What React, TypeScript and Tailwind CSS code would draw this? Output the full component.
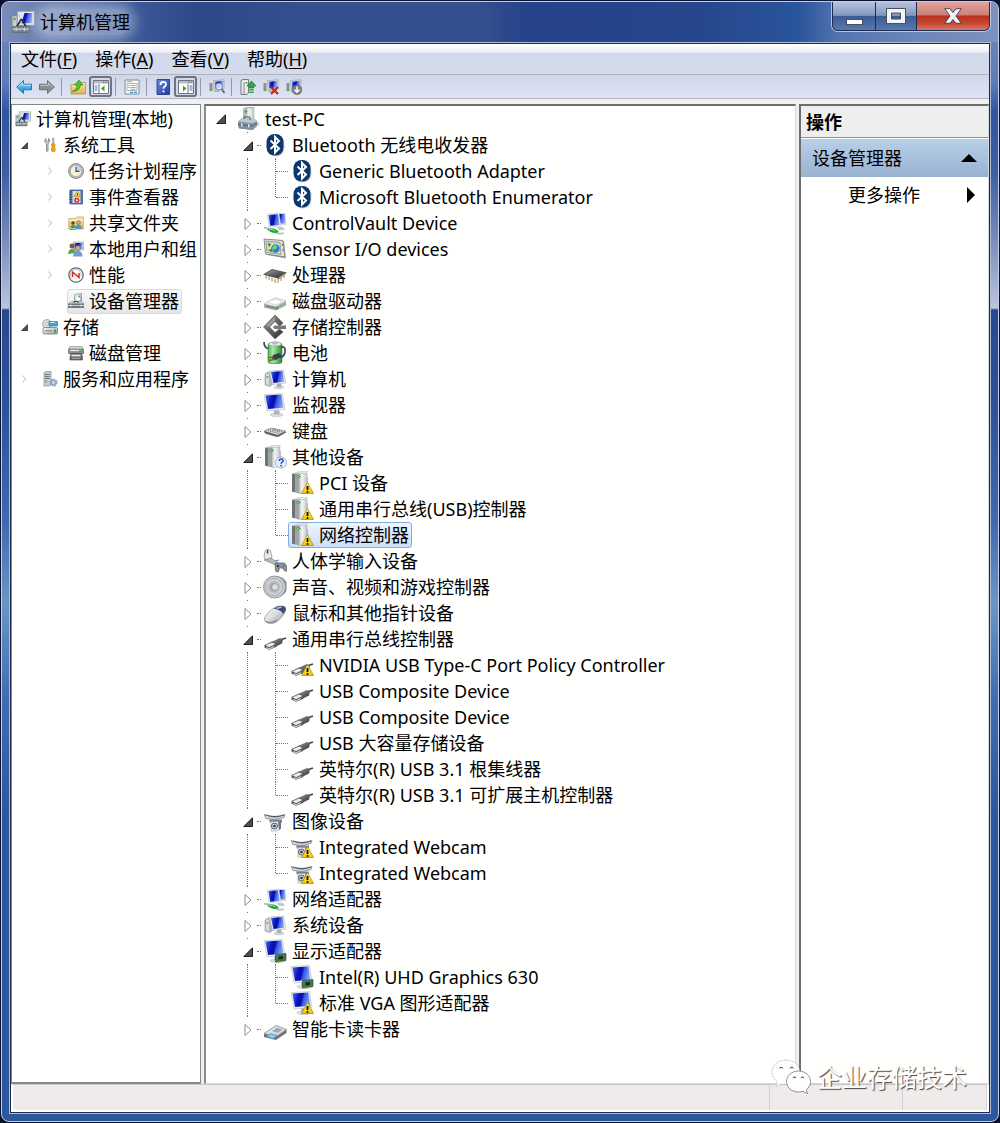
import type { ReactNode } from "react";

/* ---------- shared gradients ---------- */

function Defs() {
  return (
    <svg aria-hidden="true" className="absolute h-0 w-0">
      <defs>
        <linearGradient id="screen" x1="0" y1=".4" x2="1" y2=".6">
          <stop offset="0" stopColor="#3f58ea" />
          <stop offset=".3" stopColor="#0c14c0" />
          <stop offset=".5" stopColor="#0810a8" />
          <stop offset=".6" stopColor="#3554e6" />
          <stop offset="1" stopColor="#8fb0f8" />
        </linearGradient>
        <linearGradient id="metal" x1="0" y1="0" x2="1" y2="1">
          <stop offset="0" stopColor="#fafafa" />
          <stop offset="1" stopColor="#9a9ea3" />
        </linearGradient>
        <linearGradient id="mouse" x1="0" y1="0" x2="1" y2="1">
          <stop offset="0" stopColor="#ffffff" />
          <stop offset=".5" stopColor="#d9dbde" />
          <stop offset="1" stopColor="#8d9196" />
        </linearGradient>
        <linearGradient id="tower" x1="0" y1="0" x2="1" y2="0">
          <stop offset="0" stopColor="#c4c6c7" />
          <stop offset=".4" stopColor="#f4f4f4" />
          <stop offset="1" stopColor="#c3c5c6" />
        </linearGradient>
        <linearGradient id="dark" x1="0" y1="0" x2="1" y2="1">
          <stop offset="0" stopColor="#9a9a9e" />
          <stop offset="1" stopColor="#2c2c34" />
        </linearGradient>
        <linearGradient id="green" x1="0" y1="0" x2="1" y2="0">
          <stop offset="0" stopColor="#4fb45a" />
          <stop offset=".35" stopColor="#a9eaa4" />
          <stop offset="1" stopColor="#238a33" />
        </linearGradient>
        <linearGradient id="yellow" x1="0" y1="0" x2="0" y2="1">
          <stop offset="0" stopColor="#fff27a" />
          <stop offset="1" stopColor="#f2c200" />
        </linearGradient>
        <linearGradient id="folder" x1="0" y1="0" x2="0" y2="1">
          <stop offset="0" stopColor="#fbe7a6" />
          <stop offset="1" stopColor="#e0b452" />
        </linearGradient>
        <linearGradient id="blueArrow" x1="0" y1="0" x2="0" y2="1">
          <stop offset="0" stopColor="#8fdcff" />
          <stop offset="1" stopColor="#1686cf" />
        </linearGradient>
        <linearGradient id="help" x1="0" y1="0" x2="1" y2="1">
          <stop offset="0" stopColor="#6f8be6" />
          <stop offset="1" stopColor="#1d3a9c" />
        </linearGradient>
        <radialGradient id="cone">
          <stop offset="0" stopColor="#f4f6f8" />
          <stop offset=".3" stopColor="#9da3a9" />
          <stop offset="1" stopColor="#dfe2e4" />
        </radialGradient>
      </defs>
    </svg>
  );
}

/* ---------- small building blocks for drawings ---------- */

function Svg({ size, children, large = false }: { size: 16 | 24; children: ReactNode; large?: boolean }) {
  return (
    <svg
      aria-hidden="true"
      viewBox={size === 16 ? "0 0 16 16" : "0 0 24 24"}
      className={size === 16 && !large ? "size-4 shrink-0" : "size-6 shrink-0"}
    >
      {children}
    </svg>
  );
}

const Warning = () => (
  <g>
    <path d="M17.500 11.500 23.500 22.500H11.500Z" fill="url(#yellow)" stroke="#b98f00" strokeWidth=".8" strokeLinejoin="round" />
    <path d="M17.500 15v4" stroke="#111" strokeWidth="1.800" />
    <circle cx="17.500" cy="20.900" r="1" fill="#111" />
  </g>
);

const Monitor = () => (
  <g>
    <ellipse cx="13.500" cy="21.800" rx="6.500" ry="1.800" fill="#dcdfe1" stroke="#b2b6ba" strokeWidth=".5" />
    <path d="M11 16h5l.8 5.500H11Z" fill="#b0b4b8" />
    <path d="M1 1.500 19.500.5l2.500 16-18 1.500Z" fill="#eceef0" stroke="#bcc0c4" strokeWidth=".6" />
    <path d="M2.500 2.500 18.300 1.600l2.200 13.200-15.500 1.300Z" fill="url(#screen)" />
  </g>
);

const ComputerArt = () => (
  <g>
    <path d="M2 7 5 5h5v12l-3 2.500-5-1.500Z" fill="#b4b8bb" stroke="#8b9093" strokeWidth=".5" />
    <path d="M3 7.500 6 6v12l-3-.8Z" fill="#d9dcde" />
    <circle cx="4.500" cy="10" r="1.100" fill="#4cb848" />
    <ellipse cx="16" cy="20.300" rx="5" ry="1.600" fill="#d5d8db" stroke="#b2b6ba" strokeWidth=".4" />
    <path d="M14 16h4l.5 4H14Z" fill="#a9adb1" />
    <path d="M6.500 4 20.500 3l2.200 13-13.200 1.500Z" fill="#eceef0" stroke="#aeb2b6" strokeWidth=".6" />
    <path d="M8 5 19.400 4.100 21.200 14.700 10.500 16Z" fill="url(#screen)" />
  </g>
);

const TowerArt = () => (
  <g>
    <path d="M14 6h4v14l-3 3Z" fill="#a2a5a7" opacity=".6" />
    <path d="M2 3 9 1v21.500l-7-2Z" fill="#a0a4a6" />
    <path d="M2 3 5 2v19.300l-3-.8Z" fill="#6f7375" />
    <path d="M9 2h8v17l-3 3.500H9Z" fill="url(#tower)" stroke="#9a9d9f" strokeWidth=".4" />
    <path d="M2 3 9.500.3H17.500L16 2.500H8Z" fill="#e5e6e6" stroke="#a9acae" strokeWidth=".4" />
    <path d="M5.500 5.500 8 4l3 1.300L8.500 7Z" fill="#2f9a27" />
    <path d="M7 5.500h1.500" stroke="#c9f5c0" />
  </g>
);

const WebcamArt = () => (
  <g>
    <path d="M1 5.500q10 4 21 0l-1 3q-9 3.500-18 1Z" fill="#d4d7da" stroke="#777b80" strokeWidth=".7" />
    <path d="M3 6q9 3.500 18 0" fill="none" stroke="#4a5a78" strokeWidth="1.300" />
    <path d="M6 10.500h13v3H7Z" fill="#7c8085" />
    <path d="M8 12.500h9v8l-3 1.500H8Z" fill="#eceef0" stroke="#9a9ea3" strokeWidth=".6" />
    <path d="M15 12.500h3v7l-2 1.500Z" fill="#6c747c" />
    <circle cx="11.500" cy="17" r="3" fill="#ccd5df" stroke="#4a5a6e" />
    <circle cx="11.500" cy="17" r="1.300" fill="#24364d" />
  </g>
);

const UsbArt = () => (
  <g transform="translate(0 2.500)">
    <path d="M17 10.500 23 8.500" stroke="#44444c" strokeWidth="1.800" />
    <path d="M8 12.500 17 8.500l3 1.500-1 4-7 3.500-4-1Z" fill="url(#dark)" />
    <path d="M1.500 15.500 9 12l5 2.500-1 3L6 20.500l-4.500-2.500Z" fill="#54555d" />
    <path d="M2.500 15.800 9 13l3.500 1.500-6.500 3.300Z" fill="#e9eaec" />
    <path d="M3.500 18 6 19.500l5-2.500" stroke="#cfd0d4" strokeWidth="1.200" fill="none" />
  </g>
);

const Board = () => (
  <g>
    <path d="M12.500 15.500 23 14.500v7l-10.500 1.500Z" fill="#3f7a55" stroke="#124a22" strokeWidth=".6" />
    <path d="M15.500 17.500 20 17v3l-4.500.5Z" fill="#222" />
    <path d="M13 23.500 22 22.400" stroke="#caa12a" strokeWidth="1" strokeDasharray="1 .7" />
  </g>
);

/* ---------- device icons (24px) ---------- */

const RootIcon = () => (
  <Svg size={24}>
    <path d="M7 1.500 10 0h8v14H7Z" fill="#b7babc" />
    <path d="M10 1h8v13h-8Z" fill="url(#tower)" stroke="#a3a6a8" strokeWidth=".5" />
    <circle cx="10" cy="4.500" r="1.200" fill="#37a12f" />
    <path d="m17 22 6-4v-3l-4 1Z" fill="#c5c9cb" />
    <path d="M2 14.500 6 11h11l4 3v5l-4 4-14-1.500Z" fill="#8796a0" />
    <path d="M2 14.500 6 11h11l4 3-5 2.500Z" fill="#b9c6ce" />
    <path d="M2 15 16 16.500V23L2.500 21Z" fill="#7d8f9b" />
    <path d="M2 17.500 16 19l5-3" fill="none" stroke="#53626c" />
    <path d="M8 12v-2h6v3" fill="none" stroke="#4f5b62" />
    <path d="M5 16.500h1.500v3H5zM12 17.200h1.500v3H12z" fill="#e6ecef" />
  </Svg>
);

const BluetoothIcon = () => (
  <Svg size={24}>
    <rect x="4.500" y="2" width="17" height="21.500" rx="8" fill="#9aa6b5" opacity=".45" />
    <rect x="3.500" y="1" width="17" height="21.500" rx="8" fill="#0b376e" />
    <path d="M7.500 7.500 16 15.500l-4 4V4l4 4-8.500 8" fill="none" stroke="#fff" strokeWidth="2" />
  </Svg>
);

const NetworkIcon = () => (
  <Svg size={24}>
    <path d="M11 2.500h11l1 11-11 .5Z" fill="#e3e6e9" stroke="#b8bcc1" strokeWidth=".5" />
    <path d="M12 3h9.500l.8 9.500H13Z" fill="url(#screen)" />
    <path d="M4 3 16 2l2 13-12 1Z" fill="#eceef0" stroke="#c3c7cb" strokeWidth=".5" />
    <path d="M5.500 4 15 3.200 16.700 14l-9.500.8Z" fill="url(#screen)" />
    <path d="M14 16h6l2 3h-6Z" fill="#c4c8cc" />
    <path d="M1 17q4-.5 7 2M13 22q4 1.500 8 0" fill="none" stroke="#b9bec2" strokeWidth="1.800" />
    <path d="M4 18.500q5-2 8-.5t4 3q-3 1.500-6 .8T4 18.500Z" fill="#1fa83a" />
    <path d="M6 18.700q4-1 6 1" stroke="#8cf09a" fill="none" />
  </Svg>
);

const SensorIcon = () => (
  <Svg size={24}>
    <path d="M3 3 21 4l2 17.500L4 18Z" fill="#a8acae" />
    <path d="M1 2 20 3.500l2 16.500L2.500 17Z" fill="#dfe3e1" stroke="#6f7476" strokeWidth=".8" />
    <path d="M3 4 17 5.500l1 12L4 15.500Z" fill="#d2debf" stroke="#7d8a6b" strokeWidth=".7" />
    <path d="m5 6 3 1-2 3ZM5 13l4-1v3Z" fill="#4b6332" />
    <circle cx="12.500" cy="11.500" r="4.300" fill="#2f7fd6" />
    <path d="M10 9q3-2 4 0t-2 3-1 3q-3-2-1-6Z" fill="#79d34a" />
    <circle cx="19.500" cy="8" r=".8" fill="#555" />
    <circle cx="20" cy="13" r=".8" fill="#555" />
  </Svg>
);

const CpuIcon = () => (
  <Svg size={24}>
    <path d="M3 12v4M6 13v4M9 14.500v4M12 16v4M15 16v4M18 14v4M21 12v3" stroke="#b98a4a" strokeWidth="1.100" />
    <path d="M0 11.500 9 6l15 3.500-8 6.500Z" fill="#55565a" />
    <path d="M2 11.300 9.500 6.800 22 9.800l-6.500 4.500Z" fill="url(#dark)" />
    <path d="M16 14.200 23 9.700v1.500L16 16Z" fill="#c3a063" />
  </Svg>
);

const DiskIcon = () => (
  <Svg size={24}>
    <path d="M1 15 12 8.500 23 12v4.500L13 21.500 1 18.500Z" fill="#a4a7aa" />
    <path d="M1 15 12 8.500 23 12l-10 5.500Z" fill="#eff0f1" stroke="#b2b5b8" strokeWidth=".5" />
    <ellipse cx="12" cy="13" rx="6" ry="2.300" fill="#fff" stroke="#c3c5c7" strokeWidth=".6" />
    <path d="M3 16.800 12 19" stroke="#6e7174" />
    <circle cx="14" cy="19" r="1.500" fill="#37b52d" />
  </Svg>
);

const StorageControllerIcon = () => (
  <Svg size={24}>
    <path d="M12 0 20 8l-3.500 3L12 6.500 6.500 12 12 17.500l4.500-3.500L20 17l-8 7L.5 12Z" fill="url(#dark)" stroke="#4b4b4b" strokeWidth=".5" />
    <path d="M12 1.500 3 11l3 .5L12 5.500Z" fill="#fff" opacity=".3" />
    <path d="M11.500 10.500h11.500v3.500h-11.500l-1.500-1.700Z" fill="#777" />
  </Svg>
);

const BatteryIcon = () => (
  <Svg size={24}>
    <rect x="5" y="2" width="14" height="20.500" rx="2.500" fill="url(#green)" stroke="#267d33" strokeWidth=".6" />
    <ellipse cx="12" cy="3" rx="6.500" ry="2" fill="#e9ebec" stroke="#8a8e91" strokeWidth=".6" />
    <ellipse cx="12" cy="2" rx="2.500" ry="1.200" fill="#c9cdd0" stroke="#8a8e91" strokeWidth=".5" />
    <path d="M1 1q0 6 4.500 6.500M18 6q5-1 4 5t-6 5" fill="none" stroke="#40475c" strokeWidth="1.700" />
    <path d="M10 14 16 12l3 3-6 4-4-1Z" fill="#3b3f4c" />
    <path d="m5 17 5-1M6 19.500l5-1" stroke="#85672a" strokeWidth="1.500" />
  </Svg>
);

const ComputerIcon = () => (
  <Svg size={24}>
    <ComputerArt />
  </Svg>
);

const MonitorIcon = () => (
  <Svg size={24}>
    <Monitor />
  </Svg>
);

const KeyboardIcon = () => (
  <Svg size={24}>
    <path d="M1 12.500q0-1 4-2.500 3-1.500 5-1l12 3q1.500.5 1 1.500l-7 4q-2 .8-4 0L2 14.500Z" fill="#5e6063" />
    <path d="M1.500 12 8.500 9l14 3-8 4Z" fill="#e6e7e8" stroke="#85878a" strokeWidth=".5" />
    <path d="m5 11.500 11 3M7 10.500l11 2.800M9.500 10l10 2.400" stroke="#6a6c6f" strokeDasharray="1.400 .8" />
  </Svg>
);

const UnknownGroupIcon = () => (
  <Svg size={24}>
    <TowerArt />
    <circle cx="18" cy="17.500" r="5.500" fill="#e7eefc" stroke="#8fa3c8" strokeWidth=".8" />
    <path d="M16.200 16q.2-2 2-2t1.900 1.700q0 1-1.200 1.600-.8.500-.8 1.400" fill="none" stroke="#1e49c8" strokeWidth="1.500" />
    <circle cx="18.100" cy="20.700" r=".9" fill="#1e49c8" />
  </Svg>
);

const UnknownDeviceIcon = () => (
  <Svg size={24}>
    <TowerArt />
    <Warning />
  </Svg>
);

const HidIcon = () => (
  <Svg size={24}>
    <path d="M2 2q1.500-2.500 4-1.500T8 4l1 4q0 3-4 3T1 8Z" fill="#e6e8ea" stroke="#85898c" strokeWidth=".7" />
    <path d="M4.500 1v3.500" stroke="#444" strokeWidth="1.500" />
    <path d="m1 11 12 5 3-1.500L8 9Z" fill="#b5b8bb" stroke="#77797c" strokeWidth=".6" />
    <path d="M12 15q2-2 4-1h4q2.500-.5 3.500 3l.5 4q-.5 2.500-2.500.5L19.500 19h-3l-1 3.500q-2 1.500-3-1Z" fill="#8e9298" stroke="#4f5358" strokeWidth=".7" />
    <circle cx="15" cy="17" r="1.200" fill="#3a3d42" />
    <circle cx="20.500" cy="17" r="1" fill="#2f6fd6" />
    <path d="m12 12 4-1" stroke="#3a82d8" />
  </Svg>
);

const SpeakerIcon = () => (
  <Svg size={24}>
    <path d="M12 1q8 0 11.500 6v9Q20 22 12 23Z" fill="#8a8f93" />
    <circle cx="11.500" cy="12" r="11" fill="#c8cccf" stroke="#878b8f" strokeWidth=".8" />
    <circle cx="11" cy="12" r="8.500" fill="url(#cone)" stroke="#9b9fa3" strokeWidth=".8" />
    <circle cx="12" cy="12" r="3.200" fill="#dce2e8" stroke="#878d93" strokeWidth=".6" />
  </Svg>
);

const MouseIcon = () => (
  <Svg size={24}>
    <path d="M1.500 17q2-5 7-8.500Q14 4 19 5q4 1 3.500 4-.5 4-5 8.500-4 4.500-8 5t-7-1.500q-1.500-1.500-1-4Z" fill="url(#mouse)" stroke="#85898e" strokeWidth=".6" />
    <path d="M10.500 7.500Q17 3.500 21.500 5.500q2 1.500 1 4.500L20 13q-1-4-9.500-5.500Z" fill="#3c4a78" />
    <path d="m13.500 7.500 5-1.500" stroke="#a9b8e4" strokeWidth="1.500" />
    <path d="M3 20.500q5 2.500 11-1.500" fill="none" stroke="#74787d" />
  </Svg>
);

const UsbIcon = () => (
  <Svg size={24}>
    <UsbArt />
  </Svg>
);

const UsbWarningIcon = () => (
  <Svg size={24}>
    <UsbArt />
    <Warning />
  </Svg>
);

const WebcamIcon = () => (
  <Svg size={24}>
    <WebcamArt />
  </Svg>
);

const WebcamWarningIcon = () => (
  <Svg size={24}>
    <WebcamArt />
    <Warning />
  </Svg>
);

const DisplayIcon = () => (
  <Svg size={24}>
    <Monitor />
    <Board />
  </Svg>
);

const DisplayWarningIcon = () => (
  <Svg size={24}>
    <Monitor />
    <Warning />
  </Svg>
);

const CardReaderIcon = () => (
  <Svg size={24}>
    <path d="M1 17 13 9.500l10.500 3V16L13 23 1 20Z" fill="#70767c" />
    <path d="M1 16.500 13 8.500l10.500 4L12.500 20Z" fill="#dde1e4" stroke="#7b8187" strokeWidth=".7" />
    <path d="m9 14 5-3.300 5.500 1.800-5 3.500Z" fill="#a2a9b0" />
    <path d="m3 19 5-2.500 6 2-4 3.500Z" fill="#8ec9ec" stroke="#2f7fae" strokeWidth=".6" />
  </Svg>
);

/* ---------- console icons (16px) ---------- */

const ConsoleIcon = ({ large = false }: { large?: boolean }) => (
  <Svg size={16} large={large}>
    <path d="M.8 4h3.400v8H.8Z" fill="#c9ccd0" stroke="#85898d" strokeWidth=".4" />
    <circle cx="2.300" cy="6" r=".9" fill="#3fb63a" />
    <path d="M4.200.8h11.300v9.400H4.200Z" fill="#e9eae4" stroke="#8f9294" strokeWidth=".6" />
    <path d="M5.500 2h8.700v6.800H5.500Z" fill="url(#screen)" />
    <path d="M5.500 2h3.500l-2 6.800H5.500Z" fill="#dfe7fb" />
    <path d="M7 6 3.800 11M7 6l3 5" stroke="#2d3238" strokeWidth="1.100" />
    <path d="M.8 11h11.400v4H.8Z" fill="#77828a" stroke="#5b656c" strokeWidth=".4" />
    <path d="M1 12.800h11M3.500 11.700v2.300M9 11.700v2.300" stroke="#c9d2d8" strokeWidth=".8" />
  </Svg>
);

const ToolsIcon = () => (
  <Svg size={16}>
    <path d="M4 1.500q-1.500 1-1.200 3 .3 1.300 1.700 2V14q.7 1.300 1.500 0V6.500Q8 5.500 7.700 3.500 7.300 2 6.500 1.500V4L5.200 4.700 4 4Z" fill="#e0e2e4" stroke="#6e7276" strokeWidth=".8" />
    <path d="M10.500 1h1.500v6h-1.500Z" fill="#b7babd" stroke="#84878a" strokeWidth=".4" />
    <path d="M9.700 7h3.200v2l-.6 1 .8 1v3q-1.800 2-3.600 0v-3l.8-1-.6-1Z" fill="#f0a91c" stroke="#b6770a" strokeWidth=".6" />
  </Svg>
);

const ClockIcon = () => (
  <Svg size={16}>
    <circle cx="8" cy="8" r="7.500" fill="#b9bcc0" stroke="#75787c" strokeWidth=".8" />
    <circle cx="8" cy="8" r="5.700" fill="#f6f0d8" stroke="#a09a88" strokeWidth=".6" />
    <path d="M8 2.500A5.500 5.500 0 0 1 13.500 8H8Z" fill="#bcd4ee" />
    <path d="M8 4v4.300h3.500" fill="none" stroke="#3d4e66" strokeWidth="1.200" />
  </Svg>
);

const EventIcon = () => (
  <Svg size={16}>
    <path d="M2 1h12.500v14H2Z" fill="#5575b5" stroke="#2f4d87" strokeWidth=".7" />
    <path d="M4.500 2h8v12h-8Z" fill="#cbd9f0" />
    <path d="M1 3h3M1 5.500h3M1 8h3M1 10.500h3M1 13h3" stroke="#48505c" strokeWidth=".9" />
    <path d="m9.500 2.500 3.500 5H6Z" fill="url(#yellow)" stroke="#b98f00" strokeWidth=".6" />
    <path d="M9.500 4.300v2" stroke="#111" strokeWidth=".8" />
    <circle cx="8.800" cy="11.200" r="2.500" fill="#d92c22" />
    <circle cx="8.800" cy="11.200" r="1" fill="#fff" />
  </Svg>
);

const SharedFolderIcon = () => (
  <Svg size={16}>
    <path d="M.8 3.500h6.700L9 2h6.300v12H.8Z" fill="url(#folder)" stroke="#b98f3a" strokeWidth=".6" />
    <path d="M1 5h14" stroke="#fff3cc" />
    <circle cx="5" cy="8" r="1.800" fill="#5b4632" />
    <circle cx="10.500" cy="7.500" r="1.800" fill="#e2b58d" stroke="#5b4632" strokeWidth=".6" />
    <path d="M2 15q0-5 3-5t3 4l-1 1Z" fill="#3d9a4d" />
    <path d="M7.500 14q0-4.500 3-4.500t3 4.500Z" fill="#4b92c9" />
    <path d="M1.500 12.500q3 2.500 6 1" stroke="#d6f5df" fill="none" />
  </Svg>
);

const UsersIcon = () => (
  <Svg size={16}>
    <path d="M5.500 1h10v8h-10Z" fill="#dfe1e3" stroke="#94989c" strokeWidth=".6" />
    <path d="M6.500 2h8v6h-8Z" fill="url(#screen)" />
    <circle cx="4" cy="5" r="2.500" fill="#7a563a" />
    <circle cx="9.800" cy="7" r="2.500" fill="#dca77a" stroke="#7a563a" strokeWidth=".6" />
    <path d="M0 13q.5-5 4-5t4 4Z" fill="#5aa34c" />
    <path d="M5 15.500q.5-6 4.800-6t4.700 6Z" fill="#6c9fd2" />
  </Svg>
);

const PerformanceIcon = () => (
  <Svg size={16}>
    <circle cx="8" cy="8" r="7.200" fill="#fff" stroke="#66696c" strokeWidth="1.300" />
    <path d="M4.500 10V5l6.500 5.500V6" fill="none" stroke="#d8261c" strokeWidth="1.500" />
    <path d="M3.500 11.500A5.500 5.500 0 0 1 8 2.500a5.500 5.500 0 0 1 5 7" fill="none" stroke="#a9abad" strokeWidth=".7" />
  </Svg>
);

const DeviceManagerIcon = () => (
  <Svg size={16}>
    <path d="M6.500 1.500 13.500.5v8.500h-7Z" fill="url(#metal)" stroke="#7b8084" strokeWidth=".6" />
    <path d="M8.500 2.500h3.500v5H8.500Z" fill="#fff" />
    <circle cx="11" cy="3.500" r="1.100" fill="#53bb3c" />
    <path d="m0 10.500 3-2h11l2 2V15H0Z" fill="#6b767d" />
    <path d="m0 10.500 3-2h11l2 2Z" fill="#c8d0d4" />
    <path d="M0 12.500h16M3 11.300v2.500M13 11.300v2.500" stroke="#e0e6e9" strokeWidth=".8" />
    <path d="M6 10V8.500h4V10" fill="none" stroke="#3d474d" />
  </Svg>
);

const StorageIcon = () => (
  <Svg size={16}>
    <circle cx="5" cy="5" r="4.500" fill="#d5dce0" stroke="#8b9398" strokeWidth=".7" />
    <circle cx="5" cy="5" r="1.300" fill="#fff" stroke="#8b9398" strokeWidth=".5" />
    <path d="M7 2.500h8.500V7H7Z" fill="#43a4d8" stroke="#1e6f9e" strokeWidth=".6" />
    <path d="M8 3.500h5" stroke="#c6ebfc" />
    <rect x="1" y="8.500" width="14.500" height="6.500" rx="1.200" fill="url(#metal)" stroke="#66696c" strokeWidth=".7" />
    <path d="M3 11.800h7" stroke="#808386" />
    <path d="M12 10.500h2v3h-2Z" fill="#3aa935" />
  </Svg>
);

const DiskManagementIcon = () => (
  <Svg size={16}>
    <path d="M2 1.500h12l1.500 3v4H.5v-4Z" fill="#8b8e90" stroke="#4e5152" strokeWidth=".6" />
    <path d="M2 1.500h12l1 2H1Z" fill="#d8dadb" />
    <path d="M2 5.500h9" stroke="#e7e8e9" strokeWidth="1.200" />
    <path d="M12 5h2v2h-2Z" fill="#38c52f" />
    <path d="M3 8.500h10.500l1 3V15H2v-3.500Z" fill="#6d7072" stroke="#414445" strokeWidth=".6" />
    <path d="M3.500 10.500h9" stroke="#eceded" strokeWidth="1.600" />
    <path d="M4 13.300h8" stroke="#a6a9ab" />
  </Svg>
);

const ServicesIcon = () => (
  <Svg size={16}>
    <path d="M2 1.500 4 .5h5V14l-2 1H2Z" fill="#c6ccd0" stroke="#7b8186" strokeWidth=".6" />
    <path d="M3 3.500h4.500M3 5.500h4.500M3 7.500h4.500" stroke="#616970" strokeWidth=".9" />
    <circle cx="4" cy="10.500" r=".9" fill="#42b03a" />
    <circle cx="11.500" cy="11.500" r="3" fill="none" stroke="#8aa5c4" strokeWidth="2.200" strokeDasharray="1.600 .7" />
    <circle cx="11.500" cy="11.500" r="2.400" fill="#d7e3f0" stroke="#6787ab" strokeWidth=".8" />
    <circle cx="11.500" cy="11.500" r=".9" fill="#fff" stroke="#6787ab" strokeWidth=".5" />
  </Svg>
);

/* ---------- toolbar icons ---------- */

const BackIcon = () => (
  <Svg size={16}>
    <path d="M.7 8 7.500 1.500v3.700h8v5.600h-8v3.700Z" fill="url(#blueArrow)" stroke="#186fa8" strokeWidth=".9" strokeLinejoin="round" />
    <path d="M2.500 7.800 6.500 4v2.300H15" fill="none" stroke="#d4f2ff" strokeWidth=".8" />
  </Svg>
);

const ForwardIcon = () => (
  <Svg size={16}>
    <path d="M15.300 8 8.500 1.500v3.700h-8v5.600h8v3.700Z" fill="#8c8e90" stroke="#66696c" strokeWidth=".9" strokeLinejoin="round" />
    <path d="M1.300 6.300h8V4l4.200 4" fill="none" stroke="#d8dadb" strokeWidth=".8" />
  </Svg>
);

const FolderUpIcon = () => (
  <Svg size={16}>
    <path d="M1 5.500h9l1-2h4.500V15H1Z" fill="url(#folder)" stroke="#b58a36" strokeWidth=".7" />
    <path d="M2.500 12q4.500-1 4.500-6H4.500L9 1l4 5h-2.500Q10 12 2.500 12.500Z" fill="#4fc236" stroke="#23801a" strokeWidth=".6" />
  </Svg>
);

const PaneArt = ({ flip = false }: { flip?: boolean }) => (
  <g>
    <path d="M.5 1.500h15v13H.5Z" fill="#fff" stroke="#6c7480" />
    <path d="M1 2h14v2.500H1Z" fill="#b5bcc8" />
    <path d="M10 3.300h4" stroke="#5e6672" strokeDasharray="1 .6" />
    {flip ? (
      <g>
        <path d="M10 5v9" stroke="#6c7480" />
        <path d="M11.500 7h3M11.500 9h3M11.500 11h3" stroke="#3f76b8" />
        <path d="m5 6.500 3.500 3L5 12.500Z" fill="#2ea823" />
      </g>
    ) : (
      <g>
        <path d="M6 5v9" stroke="#6c7480" />
        <path d="M1.500 7h3M1.500 9h3M1.500 11h3" stroke="#3f76b8" />
        <path d="m11.500 6.500-3.500 3 3.500 3Z" fill="#2ea823" />
      </g>
    )}
  </g>
);

const TreePaneIcon = () => (
  <Svg size={16}>
    <PaneArt />
  </Svg>
);

const ActionPaneIcon = () => (
  <Svg size={16}>
    <PaneArt flip />
  </Svg>
);

const PropertiesIcon = () => (
  <Svg size={16}>
    <path d="M1 1h14v14H1Z" fill="#f7f8f9" stroke="#868b92" />
    <path d="M3 4.500h10v7H3Z" fill="#fff" stroke="#9aa0a7" strokeWidth=".8" />
    <path d="M4.500 6.500h1M4.500 8.500h1" stroke="#3577b5" />
    <path d="M6.500 6.500h5M6.500 8.500h5M6.500 10.200h5M3 2.700h5" stroke="#92979d" strokeWidth=".9" />
    <path d="M6 13.300h3M10 13.300h3" stroke="#3b9ac4" strokeWidth="1.200" />
  </Svg>
);

const HelpIcon = () => (
  <Svg size={16}>
    <path d="M2 .5h12.500v15H2Z" fill="url(#help)" stroke="#1b2f7c" strokeWidth=".8" />
    <path d="M5.500 6q0-3 2.800-3t2.700 2.600q0 1.400-1.500 2.200-1 .6-1 2" fill="none" stroke="#fff" strokeWidth="1.800" />
    <circle cx="8.500" cy="12.300" r="1.100" fill="#fff" />
  </Svg>
);

const MiniComputer = () => (
  <g>
    <path d="M.5 4h3v8l-3-.5Z" fill="#8d9196" />
    <circle cx="2" cy="11" r="1.300" fill="#48bd3c" />
    <path d="M4.500 1.500 15 .8v9l-9.500 1Z" fill="#d9dcdf" stroke="#8f9397" strokeWidth=".6" />
    <path d="M6 2.700 13.800 2v6.500L6.500 9.200Z" fill="url(#screen)" />
    <path d="M5 11.500h5.500V13H5Z" fill="#a9adb2" />
  </g>
);

const ScanIcon = () => (
  <Svg size={16}>
    <MiniComputer />
    <circle cx="10" cy="7.500" r="3.500" fill="#e2f0fc" fillOpacity=".85" stroke="#6688aa" />
    <path d="m12.500 10 3 4" stroke="#5e6f84" strokeWidth="1.900" />
  </Svg>
);

const UpdateIcon = () => (
  <Svg size={16}>
    <path d="M1 1.500 3 .5h5.500V14l-2 1.500H1Z" fill="#e7e9ea" stroke="#5d6265" strokeWidth=".8" />
    <path d="M4 3v12" stroke="#8a8f92" />
    <circle cx="6.500" cy="4" r="1" fill="#42b03a" />
    <path d="M11.500 2 16 7h-2.300v2H9.300V7H7Z" fill="#2fa548" stroke="#126c27" strokeWidth=".6" />
    <path d="M9.300 10h4.400v1.500H9.300zM9.300 12.500h4.400V14H9.300z" fill="#2fa548" />
  </Svg>
);

const UninstallIcon = () => (
  <Svg size={16}>
    <MiniComputer />
    <path d="m8 8 7 7m0-7-7 7" stroke="#e01b15" strokeWidth="2.200" />
  </Svg>
);

const DisableIcon = () => (
  <Svg size={16}>
    <MiniComputer />
    <circle cx="11" cy="10.800" r="4.800" fill="#7f8387" stroke="#55585b" strokeWidth=".6" />
    <path d="M11 7.500v5.500M8.500 10.800 11 13.300l2.500-2.500" fill="none" stroke="#fff" strokeWidth="1.400" />
  </Svg>
);

/* ---------- tree data ---------- */

type Node = {
  label: string;
  icon: () => ReactNode;
  open?: boolean;
  leaf?: boolean;
  selected?: boolean;
  children?: Node[];
};

const consoleTree: Node[] = [
  {
    label: "系统工具",
    icon: ToolsIcon,
    open: true,
    children: [
      { label: "任务计划程序", icon: ClockIcon },
      { label: "事件查看器", icon: EventIcon },
      { label: "共享文件夹", icon: SharedFolderIcon },
      { label: "本地用户和组", icon: UsersIcon },
      { label: "性能", icon: PerformanceIcon },
      { label: "设备管理器", icon: DeviceManagerIcon, leaf: true, selected: true },
    ],
  },
  {
    label: "存储",
    icon: StorageIcon,
    open: true,
    children: [{ label: "磁盘管理", icon: DiskManagementIcon, leaf: true }],
  },
  { label: "服务和应用程序", icon: ServicesIcon },
];

const devices: Node[] = [
  {
    label: "Bluetooth 无线电收发器",
    icon: BluetoothIcon,
    open: true,
    children: [
      { label: "Generic Bluetooth Adapter", icon: BluetoothIcon },
      { label: "Microsoft Bluetooth Enumerator", icon: BluetoothIcon },
    ],
  },
  { label: "ControlVault Device", icon: NetworkIcon },
  { label: "Sensor I/O devices", icon: SensorIcon },
  { label: "处理器", icon: CpuIcon },
  { label: "磁盘驱动器", icon: DiskIcon },
  { label: "存储控制器", icon: StorageControllerIcon },
  { label: "电池", icon: BatteryIcon },
  { label: "计算机", icon: ComputerIcon },
  { label: "监视器", icon: MonitorIcon },
  { label: "键盘", icon: KeyboardIcon },
  {
    label: "其他设备",
    icon: UnknownGroupIcon,
    open: true,
    children: [
      { label: "PCI 设备", icon: UnknownDeviceIcon },
      { label: "通用串行总线(USB)控制器", icon: UnknownDeviceIcon },
      { label: "网络控制器", icon: UnknownDeviceIcon, selected: true },
    ],
  },
  { label: "人体学输入设备", icon: HidIcon },
  { label: "声音、视频和游戏控制器", icon: SpeakerIcon },
  { label: "鼠标和其他指针设备", icon: MouseIcon },
  {
    label: "通用串行总线控制器",
    icon: UsbIcon,
    open: true,
    children: [
      { label: "NVIDIA USB Type-C Port Policy Controller", icon: UsbWarningIcon },
      { label: "USB Composite Device", icon: UsbIcon },
      { label: "USB Composite Device", icon: UsbIcon },
      { label: "USB 大容量存储设备", icon: UsbIcon },
      { label: "英特尔(R) USB 3.1 根集线器", icon: UsbIcon },
      { label: "英特尔(R) USB 3.1 可扩展主机控制器", icon: UsbIcon },
    ],
  },
  {
    label: "图像设备",
    icon: WebcamIcon,
    open: true,
    children: [
      { label: "Integrated Webcam", icon: WebcamWarningIcon },
      { label: "Integrated Webcam", icon: WebcamWarningIcon },
    ],
  },
  { label: "网络适配器", icon: NetworkIcon },
  { label: "系统设备", icon: ComputerIcon },
  {
    label: "显示适配器",
    icon: DisplayIcon,
    open: true,
    children: [
      { label: "Intel(R) UHD Graphics 630", icon: DisplayIcon },
      { label: "标准 VGA 图形适配器", icon: DisplayWarningIcon },
    ],
  },
  { label: "智能卡读卡器", icon: CardReaderIcon },
];

/* ---------- trees ---------- */

const OpenArrow = ({ small = false }: { small?: boolean }) => (
  <svg aria-hidden="true" viewBox="0 0 10 10" className={small ? "size-[7px]" : "size-2.5"}>
    <path d="M9.500.8v8.700H.8Z" fill="#505050" stroke="#1e1e1e" />
  </svg>
);

const ClosedArrow = () => (
  <svg aria-hidden="true" viewBox="0 0 8 14" className="h-3.5 w-2">
    <path d="M1 1.500 7 7 1 12.500Z" fill="#fff" stroke="#8c8c8c" />
  </svg>
);

const FaintChevron = () => (
  <svg aria-hidden="true" viewBox="0 0 6 10" className="h-2.5 w-1.5">
    <path d="m1.500 1.500 3 3.500-3 3.500" fill="none" stroke="#b9b9b9" />
  </svg>
);

function ConsoleRow({ node, level }: { node: Node; level: 1 | 2 }) {
  const Icon = node.icon;
  return (
    <li role="treeitem" aria-expanded={node.children ? true : undefined} aria-selected={!!node.selected}>
      <div className={`flex h-[26px] items-center ${level === 2 ? "pl-[26px]" : ""}`}>
        <span className="flex w-[26px] shrink-0 justify-center pr-2">
          {!node.leaf && (
            <button aria-label={`${node.open ? "折叠" : "展开"} ${node.label}`}>
              {node.open ? <OpenArrow small /> : <FaintChevron />}
            </button>
          )}
        </span>
        <button
          className={`flex h-[25px] shrink-0 items-center gap-[5px] rounded-[3px] border pr-0.5 whitespace-nowrap ${
            node.selected
              ? "border-[#d9d9d9] bg-linear-to-b from-[#fafafa] to-[#e5e5e5]"
              : "border-transparent"
          }`}
        >
          <Icon />
          {node.label}
        </button>
      </div>
      {node.children && (
        <ul role="group">
          {node.children.map((c) => (
            <ConsoleRow key={c.label} node={c} level={2} />
          ))}
        </ul>
      )}
    </li>
  );
}

function DeviceButton({ node }: { node: Node }) {
  const Icon = node.icon;
  return (
    <button
      className={`flex h-[26px] items-center gap-[5px] rounded-[3px] border pr-0.5 pl-px whitespace-nowrap ${
        node.selected
          ? "border-[#84acdd] bg-linear-to-b from-[#eef5fd] to-[#cbdff9]"
          : "border-transparent"
      }`}
    >
      <Icon />
      {node.label}
    </button>
  );
}

function DeviceGroup({ node, last }: { node: Node; last: boolean }) {
  return (
    <li role="treeitem" aria-expanded={!!node.open} aria-selected={false}>
      <div className="flex h-[26px]">
        <div className="flex w-[27px] flex-col items-center">
          <span className="size-px bg-[#777]" />
          <button
            aria-label={`${node.open ? "折叠" : "展开"} ${node.label}`}
            className="flex flex-1 items-center"
          >
            {node.open ? <OpenArrow /> : <ClosedArrow />}
          </button>
        </div>
        <div className="-ml-1 w-1 self-center border-t border-dotted border-[#777]" />
        <DeviceButton node={node} />
      </div>
      {node.children && (
        <div className="flex">
          <div className="flex w-[27px] justify-center">
            {!last && <span className="border-l border-dotted border-[#777]" />}
          </div>
          <ul role="group">
            {node.children.map((c, i) => (
              <li key={i} role="treeitem" aria-selected={!!c.selected} className="flex h-[26px]">
                <span className="flex w-[15px] shrink-0 flex-col items-end">
                  <span
                    className={`w-px border-l border-dotted border-[#777] ${
                      i === node.children!.length - 1 ? "h-[13px]" : "h-full"
                    }`}
                  />
                </span>
                <span className="mt-[13px] h-px w-3 shrink-0 border-t border-dotted border-[#777]" />
                <DeviceButton node={c} />
              </li>
            ))}
          </ul>
        </div>
      )}
    </li>
  );
}

/* ---------- chrome ---------- */

function Separator() {
  return <span className="mr-1 ml-[3px] h-[18px] w-px bg-[#9299a8]" />;
}

function Tool({ label, children, on = false }: { label: string; children: ReactNode; on?: boolean }) {
  return (
    <button
      aria-label={label}
      aria-pressed={on || undefined}
      className={
        on
          ? "flex h-[21px] w-[23px] items-center justify-center rounded-[3px] border-2 border-[#6d7488] bg-[#d3d8e4]"
          : "flex h-[21px] w-[23px] items-center justify-center"
      }
    >
      {children}
    </button>
  );
}

function TitleBar() {
  return (
    <header className="flex h-10 items-start bg-[linear-gradient(90deg,#7b8db9_0,#3f5b9a_12%,#2c4888_20%,#34508f_30%,#34508f_48%,#25418a_53%,#26468c_70%,#29559c_80%,#5474b0_84%,#6d86b8_92%,#7d92bf_100%)] pr-2 pl-[9px]">
      <div className="flex h-10 items-center gap-[5px]">
        <ConsoleIcon large />
        <h1 className="rounded-full bg-white/35 shadow-[0_0_12px_6px_rgba(255,255,255,0.35)]">计算机管理</h1>
      </div>
      <div className="ml-auto flex h-[29px] overflow-hidden rounded-b-md border border-t-0 border-[#1c2c50] shadow-[0_0_0_1px_rgba(210,222,245,0.75)]">
        <button
          aria-label="最小化"
          className="flex w-[43px] items-center justify-center border-r border-[#1c2c50] bg-[linear-gradient(#b8c4dc_0,#8397be_48%,#3b5a94_50%,#5879ae_100%)] pt-3"
        >
          <span className="h-[6px] w-[17px] border border-[#474f60] bg-white" />
        </button>
        <button
          aria-label="最大化"
          className="flex w-[41px] items-center justify-center border-r border-[#1c2c50] bg-[linear-gradient(#b8c4dc_0,#8397be_48%,#3b5a94_50%,#5879ae_100%)]"
        >
          <svg aria-hidden="true" viewBox="0 0 20 16" className="h-4 w-5">
            <path d="M.5.5h19v15H.5Zm5 4.500v6h9V5Z" fill="#f4f4f4" stroke="#474f60" fillRule="evenodd" />
          </svg>
        </button>
        <button
          aria-label="关闭"
          className="flex w-[72px] items-center justify-center bg-[linear-gradient(#dfa59f_0,#cf7f77_46%,#b8301f_50%,#c4452f_75%,#d9786a_100%)]"
        >
          <svg aria-hidden="true" viewBox="0 0 18 16" className="h-4 w-[18px]">
            <path
              d="M.7.700H6L9 4.500 12 .7h5.300L12 8l5.300 7.300H12L9 11.500 6 15.300H.7L6 8Z"
              fill="#f4f4f4"
              stroke="#4b4452"
            />
          </svg>
        </button>
      </div>
    </header>
  );
}

const menus = [
  ["文件", "F"],
  ["操作", "A"],
  ["查看", "V"],
  ["帮助", "H"],
];

export default function App() {
  return (
    <div className="relative flex min-h-screen flex-col bg-[#0b1330] p-px font-['Noto_Sans','Noto_Sans_CJK_SC',sans-serif] text-lg leading-[26px] text-black">
      <Defs />
      <div className="flex flex-1 flex-col overflow-hidden rounded-lg border border-[#c3cfe8] bg-[linear-gradient(180deg,#7388b7_0,#5f7db6_80px,#2f559f_110px,#3d5fa3_170px,#7186b6_230px,#bac5dd_306px,#27498f_308px,#2c5199_400px,#4169b0_520px,#6a96c6_600px,#3f6cb0_700px,#2c569e_820px)]">
        <TitleBar />
        <div className="mx-[7px] mb-[7px] flex flex-1 flex-col border border-[#aebbd6]">
          <div className="flex flex-1 flex-col border border-[#1f2c4c] bg-[#f0f0f0]">
            <nav className="flex h-[31px] items-center gap-[18px] border-b border-[#b1b4bd] bg-[linear-gradient(#ffffff_0,#eef1f8_8px,#d2d9eb_9px,#d4dbed_100%)] px-2.5">
              {menus.map(([t, k]) => (
                <button key={k} className="whitespace-nowrap">
                  {t}(<u className="decoration-1 underline-offset-2">{k}</u>)
                </button>
              ))}
            </nav>
            <div className="flex h-6 items-center border-b border-[#b1b4bd] bg-linear-to-b from-[#cfd7ea] to-[#dfe4f4] pl-px">
              <Tool label="后退"><BackIcon /></Tool>
              <Tool label="前进"><ForwardIcon /></Tool>
              <Separator />
              <Tool label="向上一级"><FolderUpIcon /></Tool>
              <Tool label="显示/隐藏控制台树" on><TreePaneIcon /></Tool>
              <Separator />
              <Tool label="属性"><PropertiesIcon /></Tool>
              <Separator />
              <Tool label="帮助"><HelpIcon /></Tool>
              <Tool label="显示/隐藏操作窗格" on><ActionPaneIcon /></Tool>
              <Separator />
              <Tool label="扫描检测硬件改动"><ScanIcon /></Tool>
              <Separator />
              <Tool label="更新驱动程序软件"><UpdateIcon /></Tool>
              <Tool label="卸载"><UninstallIcon /></Tool>
              <Tool label="禁用"><DisableIcon /></Tool>
            </div>

            <main className="flex flex-1 pt-[5px]">
              <aside className="w-[190px] shrink-0 overflow-hidden border border-b-2 border-[#828790] bg-[#fffffe]">
                <ul role="tree" className="pt-px pl-[3px]">
                  <li role="treeitem" aria-expanded="true" aria-selected={false}>
                    <button className="flex h-[26px] items-center gap-[5px] whitespace-nowrap">
                      <ConsoleIcon />
                      计算机管理(本地)
                    </button>
                    <ul role="group">
                      {consoleTree.map((n) => (
                        <ConsoleRow key={n.label} node={n} level={1} />
                      ))}
                    </ul>
                  </li>
                </ul>
              </aside>

              <section className="ml-[3px] flex-1 border border-t-2 border-l-2 border-t-[#6d6d6d] border-r-[#d8d8d8] border-b-[#d8d8d8] border-l-[#8a8a8a] bg-[#fffffe]">
                <ul role="tree" className="pl-px">
                  <li role="treeitem" aria-expanded="true" aria-selected={false}>
                    <div className="flex h-[26px]">
                      <button aria-label="折叠 test-PC" className="flex w-[27px] items-center justify-center">
                        <OpenArrow />
                      </button>
                      <DeviceButton node={{ label: "test-PC", icon: RootIcon }} />
                    </div>
                    <ul role="group" className="pl-[27px]">
                      {devices.map((n, i) => (
                        <DeviceGroup key={n.label} node={n} last={i === devices.length - 1} />
                      ))}
                    </ul>
                  </li>
                </ul>
              </section>

              <aside className="ml-[3px] w-[190px] shrink-0 border border-t-2 border-l-2 border-t-[#6d6d6d] border-r-[#d8d8d8] border-b-[#d8d8d8] border-l-[#6d6d6d] bg-[#fffffe]">
                <h2 className="border-b border-[#8f8f8f] bg-[#eeeeee] px-[5px] pt-[3px] pb-0.5 font-bold">操作</h2>
                <button className="mt-px flex h-[38px] w-full items-center justify-between bg-linear-to-b from-[#b8cfe9] to-[#98b2d1] pr-[11px] pl-[11px]">
                  设备管理器
                  <svg aria-hidden="true" viewBox="0 0 16 8" className="h-2 w-4">
                    <path d="M8 0 16 8H0Z" />
                  </svg>
                </button>
                <button className="flex h-9 w-full items-center justify-between pr-[13px] pl-[47px]">
                  更多操作
                  <svg aria-hidden="true" viewBox="0 0 8 16" className="h-4 w-2">
                    <path d="M0 0 8 8 0 16Z" />
                  </svg>
                </button>
              </aside>
            </main>

            <footer className="flex h-[28px] justify-end border-2 border-t border-white border-t-[#c8c8c8] bg-[#efebeb]">
              <span className="w-[133px] border-l border-[#d2d0d0]" />
              <span className="w-[85px] border-x border-[#d2d0d0]" />
            </footer>
          </div>
        </div>
      </div>

      <div className="absolute right-[33px] bottom-[26px] flex items-center gap-1 text-[25px] leading-10 text-white">
        <svg aria-hidden="true" viewBox="0 0 42 36" className="h-9 w-[42px]">
          <path
            d="M15 1C7 1 1 6.500 1 13.500c0 4 2 7 5.500 9.500L5 27.500l5.500-2.500c2 .5 4 .7 6 .5C22 25 29 20 29 13.500 29 6.500 23 1 15 1Z"
            fill="#fff"
            stroke="#999"
            strokeWidth=".6"
            strokeDasharray="2 1"
          />
          <path
            d="M27.500 12C20.500 12 15.500 17 15.500 22.500S20.500 33 27.500 33c1.500 0 3-.3 4.500-.7l4.500 2.400-1.200-4C38 28.500 39.500 26 39.500 22.500 39.500 17 34.500 12 27.500 12Z"
            fill="#fff"
            stroke="#666"
            strokeWidth=".7"
          />
          <path
            d="M8.500 9.500q2-2.500 3.500 0M19 9.500q2-2.500 3.500 0M22 19q1.500-2 3 0M30 19q1.500-2 3 0"
            fill="none"
            stroke="#555"
            strokeWidth="1.100"
          />
        </svg>
        <span className="[text-shadow:1px_1px_1px_#444]">企业存储技术</span>
      </div>
    </div>
  );
}
